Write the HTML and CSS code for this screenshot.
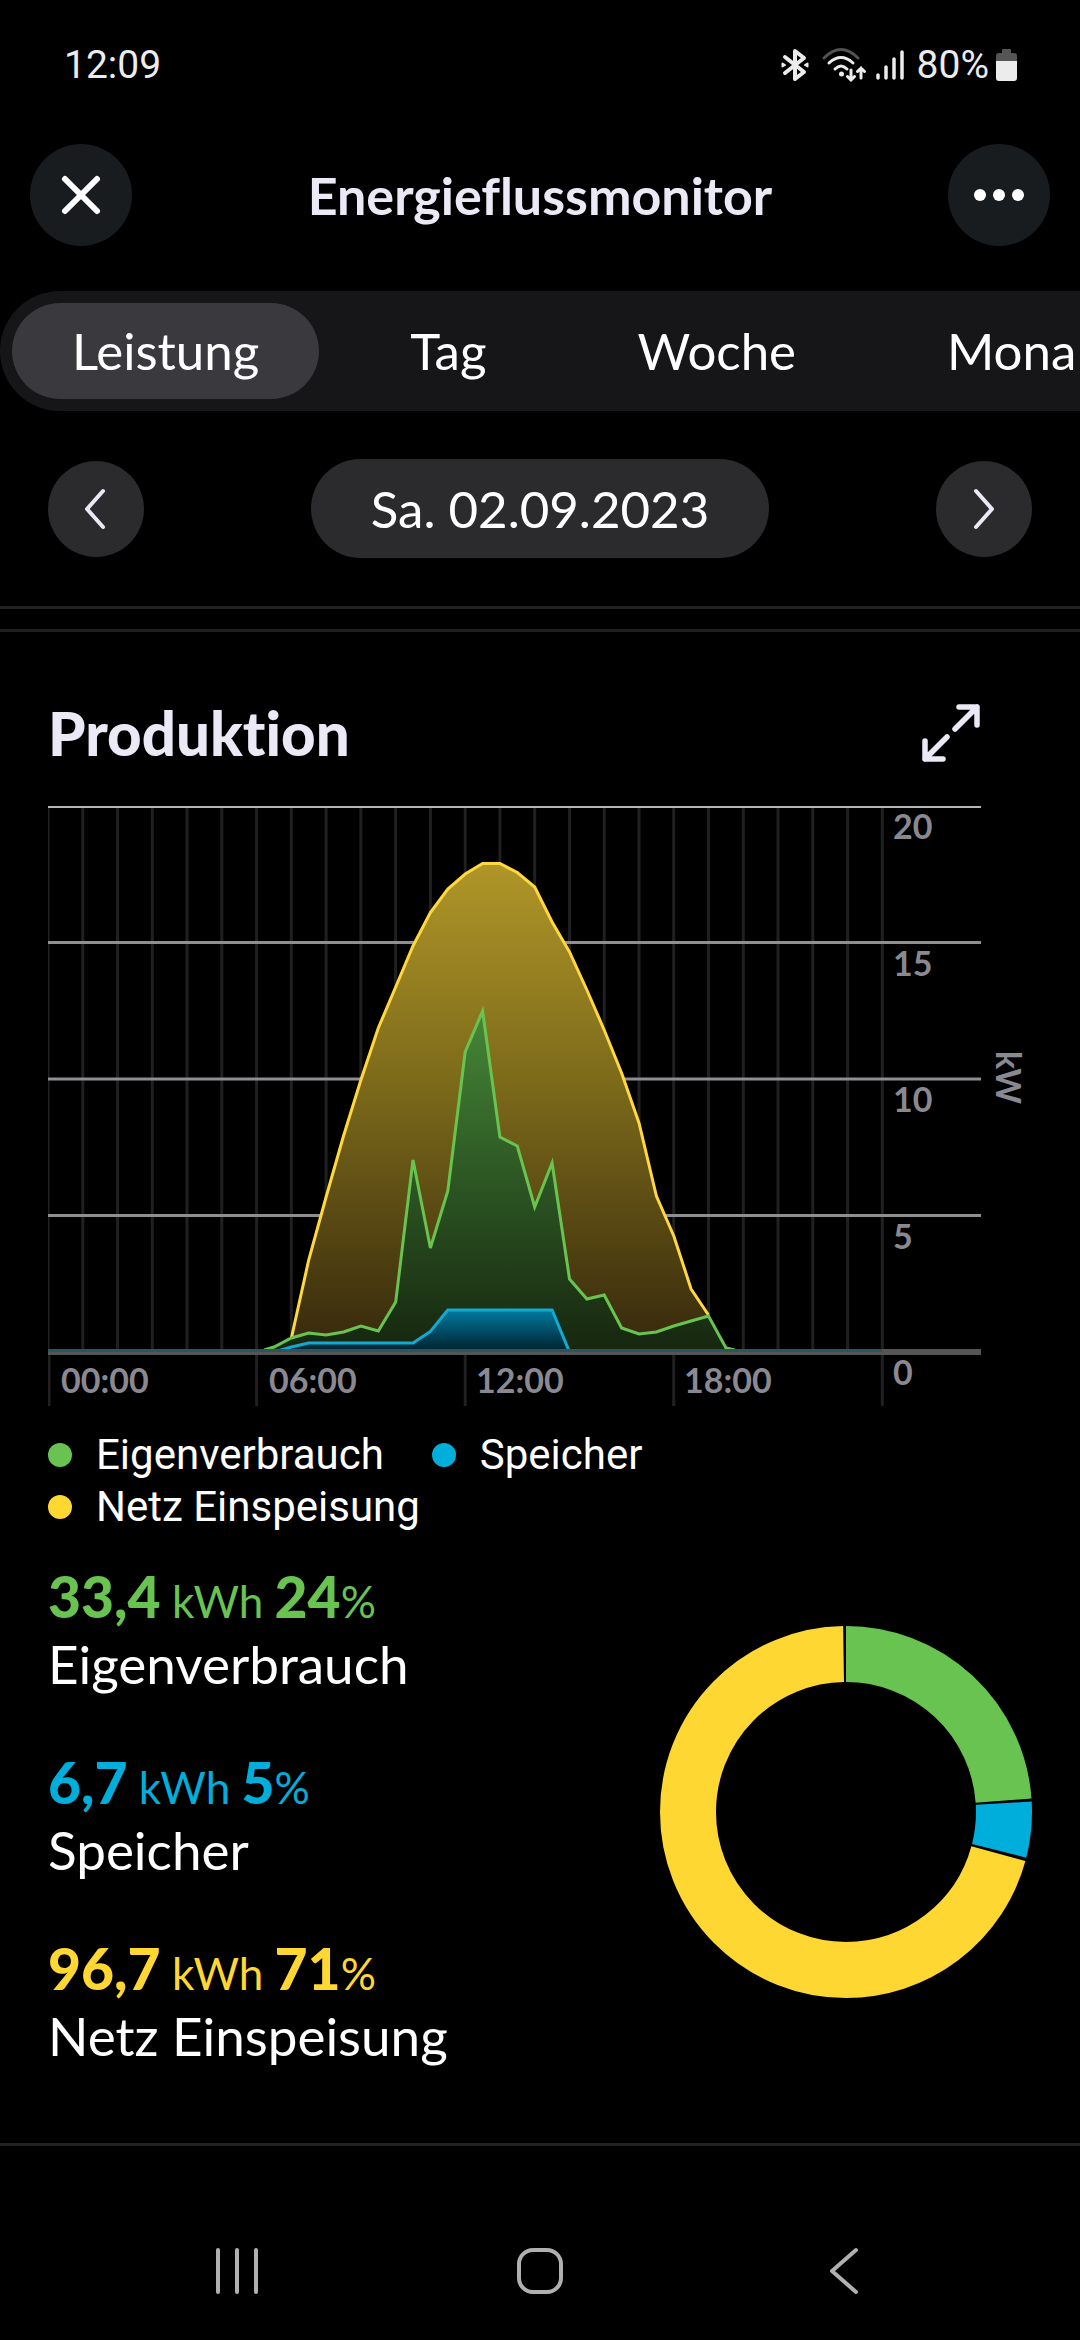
FILE: index.html
```html
<!DOCTYPE html>
<html lang="de">
<head>
<meta charset="utf-8">
<meta name="viewport" content="width=device-width, initial-scale=1">
<title>Energieflussmonitor</title>
<link rel="stylesheet" href="styles.css">
</head>
<body>
<div class="status-bar">
  <span>12:09</span>
  <div class="status-icons">
    <svg class="icon-bluetooth" viewBox="0 0 28 34" fill="none" stroke="currentColor" stroke-width="4" stroke-linejoin="round" stroke-linecap="round"><path d="M4 9 23 24 14 31V3L23 10 4 25"/><path d="M1.500 15.500v3L4 17ZM26.500 15.500v3L24 17Z" stroke-width="2"/></svg>
    <svg class="icon-wifi" viewBox="0 0 46 34" fill="none" stroke="currentColor" stroke-width="3" stroke-linecap="round"><path d="M2 10Q19-7 36 10" opacity=".35"/><path d="M7 15Q19 4 31 15M13 21Q19 15 25 21"/><circle cx="19.500" cy="26" r="2.500" fill="currentColor" stroke="none"/><path d="M29 22v10M25.500 28.500l3.500 3.500 3.500-3.500M39 30V20M35.500 23.500l3.500-3.500 3.500 3.500"/></svg>
    <svg class="icon-signal" viewBox="0 0 30 32" fill="none" stroke="currentColor" stroke-width="3.500" stroke-linecap="round"><path d="M3 26v3M11 18v11M19 10v19M27 3v26"/></svg>
    <span>80%</span>
    <svg class="icon-battery" viewBox="0 0 22 32"><path d="M6 1q0-1 1-1h7q1 0 1 1v3h3q3 0 3 3v5H0V7q0-3 3-3h3Z" fill="#555"/><path d="M0 12h21v17q0 3-3 3H3q-3 0-3-3Z" fill="currentColor"/></svg>
  </div>
</div>

<header class="app-header">
  <button class="round-button" aria-label="Schließen"><svg viewBox="0 0 102 102" fill="none" stroke="currentColor" stroke-width="6" stroke-linecap="round"><path d="M35 35 67 67M67 35 35 67"/></svg></button>
  <h1>Energieflussmonitor</h1>
  <button class="round-button" aria-label="Mehr"><svg viewBox="0 0 102 102" fill="currentColor"><circle cx="32" cy="51" r="6"/><circle cx="51" cy="51" r="6"/><circle cx="70" cy="51" r="6"/></svg></button>
</header>

<nav class="tabs" aria-label="Zeitraum">
  <button class="tab tab-active">Leistung</button>
  <button class="tab">Tag</button>
  <button class="tab">Woche</button>
  <button class="tab">Mona</button>
</nav>

<div class="date-row">
  <button class="step-button" aria-label="Vorheriger Tag"><svg viewBox="0 0 96 96" fill="none" stroke="currentColor" stroke-width="4" stroke-linecap="round" stroke-linejoin="round"><path d="M55 30 39 48 55 66"/></svg></button>
  <button class="date-button">Sa. 02.09.2023</button>
  <button class="step-button" aria-label="Nächster Tag"><svg viewBox="0 0 96 96" fill="none" stroke="currentColor" stroke-width="4" stroke-linecap="round" stroke-linejoin="round"><path d="M40 30 56 48 40 66"/></svg></button>
</div>

<main class="card">
  <div class="card-header">
    <h2>Produktion</h2>
    <button class="expand-button" aria-label="Vergrößern"><svg viewBox="0 0 60 60" fill="none" stroke="currentColor" stroke-width="5.500" stroke-linecap="round" stroke-linejoin="round"><path d="M38 4H56V22M56 4 34 26M4 38V56H22M4 56 26 34"/></svg></button>
  </div>

  <svg class="chart" viewBox="48 800 984 610" role="img" aria-label="Produktion in kW">
    <defs>
      <linearGradient id="grid-fill" x1="0" y1="0" x2="0" y2="1"><stop offset="0" stop-color="#b09628"/><stop offset=".45" stop-color="#7c6a1a"/><stop offset="1" stop-color="#35280c"/></linearGradient>
      <linearGradient id="own-fill" x1="0" y1="0" x2="0" y2="1"><stop offset="0" stop-color="#468737"/><stop offset=".5" stop-color="#2c5623"/><stop offset="1" stop-color="#16260f"/></linearGradient>
      <linearGradient id="battery-fill" x1="0" y1="0" x2="0" y2="1"><stop offset="0" stop-color="#007a9f"/><stop offset="1" stop-color="#00202b"/></linearGradient>
      <clipPath id="plot"><rect x="48" y="806" width="933" height="546"/></clipPath>
    </defs>
    <g clip-path="url(#plot)">
      <path class="hour-lines" d="M48 806V1352M82.800 806V1352M117.500 806V1352M152.300 806V1352M187 806V1352M221.800 806V1352M256.600 806V1352M291.300 806V1352M326.100 806V1352M360.900 806V1352M395.600 806V1352M430.400 806V1352M465.200 806V1352M499.900 806V1352M534.700 806V1352M569.500 806V1352M604.200 806V1352M639 806V1352M673.700 806V1352M708.500 806V1352M743.300 806V1352M778 806V1352M812.800 806V1352M847.600 806V1352M882.300 806V1352"/>
      <path class="value-lines" d="M48 942.500H981M48 1079H981M48 1215.500H981"/>
      <path d="M48 807H981" stroke="#b4b4b9" stroke-width="2"/>
      <path fill="url(#grid-fill)" d="M274 1352 291.400 1338 308.700 1260 326.100 1197 343.500 1136 360.900 1080 378.300 1028 395.700 987 413 946 430.400 912.500 447.800 889 465.200 874 482.600 863.500 499.900 863.500 517.300 872.500 534.700 887 552.100 922 569.500 952 586.900 990 604.200 1030 621.600 1073 639 1123 656.400 1196 673.800 1236 691.100 1289 708.500 1315 726 1348 743 1352Z"/>
      <path class="line line-grid" d="M291.400 1338 308.700 1260 326.100 1197 343.500 1136 360.900 1080 378.300 1028 395.700 987 413 946 430.400 912.500 447.800 889 465.200 874 482.600 863.500 499.900 863.500 517.300 872.500 534.700 887 552.100 922 569.500 952 586.900 990 604.200 1030 621.600 1073 639 1123 656.400 1196 673.800 1236 691.100 1289 708.500 1315"/>
      <path fill="url(#own-fill)" d="M256 1352 274 1347 291.400 1338 308.700 1333 326.100 1335 343.500 1332 360.900 1326 378.300 1331 395.700 1302 413 1160 430.400 1248 447.800 1191 465.200 1052 482.600 1011 499.900 1137 517.300 1146 534.700 1207 552.100 1163 569.500 1279 586.900 1299 604.200 1295 621.600 1328 639 1334 656.400 1332 673.800 1326 691.100 1321 708.500 1316 726 1348 743 1352Z"/>
      <path class="line line-own" d="M264 1350 274 1347 291.400 1338 308.700 1333 326.100 1335 343.500 1332 360.900 1326 378.300 1331 395.700 1302 413 1160 430.400 1248 447.800 1191 465.200 1052 482.600 1011 499.900 1137 517.300 1146 534.700 1207 552.100 1163 569.500 1279 586.900 1299 604.200 1295 621.600 1328 639 1334 656.400 1332 673.800 1326 691.100 1321 708.500 1316 726 1348 735 1350"/>
      <path fill="url(#battery-fill)" d="M274 1352 291.400 1347 308.700 1343H413L430.400 1331.500 447.800 1310H552.100L569.500 1352Z"/>
      <path class="line line-battery" d="M274 1352 291.400 1347 308.700 1343H413L430.400 1331.500 447.800 1310H552.100L569.500 1352"/>
    </g>
    <path d="M48 1352H981" stroke="#555556" stroke-width="6"/>
    <path d="M48 1350.500H882" stroke="#2c5560" stroke-width="3"/>
    <path class="hour-lines" d="M49 1355V1406M256.600 1355V1406M465.200 1355V1406M673.700 1355V1406M882.300 1355V1406"/>
    <g class="axis-text">
      <text x="893" y="839">20</text><text x="893" y="976">15</text><text x="893" y="1112">10</text><text x="893" y="1249">5</text><text x="893" y="1385">0</text>
      <text x="61" y="1393">00:00</text><text x="269" y="1393">06:00</text><text x="476" y="1393">12:00</text><text x="684" y="1393">18:00</text>
      <text transform="translate(996 1051) rotate(90)">kW</text>
    </g>
  </svg>

  <ul class="legend">
    <li><span class="dot dot-own"></span>Eigenverbrauch</li>
    <li><span class="dot dot-battery"></span>Speicher</li>
    <li><span class="dot dot-grid"></span>Netz Einspeisung</li>
  </ul>

  <div class="summary">
    <dl class="stats">
      <div><dd class="own"><b>33,4</b> kWh <b>24</b>%</dd><dt>Eigenverbrauch</dt></div>
      <div><dd class="battery"><b>6,7</b> kWh <b>5</b>%</dd><dt>Speicher</dt></div>
      <div><dd class="grid"><b>96,7</b> kWh <b>71</b>%</dd><dt>Netz Einspeisung</dt></div>
    </dl>
    <svg class="donut" viewBox="-186 -186 372 372" role="img" aria-label="Verteilung">
      <g fill="none" stroke-width="56" transform="rotate(-90)">
        <circle r="158" pathLength="1000" stroke="#69c350" stroke-dasharray="238.500 761.500"/>
        <circle r="158" pathLength="1000" stroke="#00aedb" stroke-dasharray="48.500 951.500" stroke-dashoffset="-241"/>
        <circle r="158" pathLength="1000" stroke="#ffd733" stroke-dasharray="705 295" stroke-dashoffset="-292.500"/>
      </g>
    </svg>
  </div>
</main>

<nav class="system-nav" aria-label="System">
  <button aria-label="Letzte Apps"><svg viewBox="0 0 100 100"><path d="M31 29V71M50 29V71M69 29V71"/></svg></button>
  <button aria-label="Start"><svg viewBox="0 0 100 100"><rect x="29" y="29" width="42" height="42" rx="14"/></svg></button>
  <button aria-label="Zurück"><svg viewBox="0 0 100 100"><path d="M63 29 39 50 63 71"/></svg></button>
</nav>
</body>
</html>
```
FILE: styles.css
```css
* { box-sizing: border-box; margin: 0; padding: 0; }
body {
  min-height: 100vh;
  overflow-x: hidden;
  background: #000;
  color: #fff;
  font-family: Lato, "Open Sans", sans-serif;
  font-size: 51px;
  font-variant-ligatures: none;
}
button { border: 0; background: none; color: inherit; font: inherit; font-variant-ligatures: none; }
svg { display: block; flex: none; }
ul { list-style: none; }

.status-bar {
  display: flex;
  align-items: center;
  justify-content: space-between;
  height: 129px;
  padding: 0 62px 0 64px;
  color: #ececec;
  font-family: Roboto, sans-serif;
  font-size: 39px;
}
.status-icons { display: flex; align-items: center; gap: 7px; }
.icon-bluetooth { width: 28px; height: 34px; margin-right: 6px; }
.icon-wifi { width: 46px; height: 34px; }
.icon-signal { width: 30px; height: 32px; margin-right: 5px; }
.icon-battery { width: 22px; height: 32px; }

.app-header {
  display: flex;
  align-items: center;
  justify-content: space-between;
  padding: 15px 30px 45px;
}
.app-header h1 { color: #eae9f5; font-size: 52px; font-weight: 700; line-height: 60px; }
.round-button { width: 102px; height: 102px; border-radius: 50%; background: #191c1f; }

.tabs {
  display: flex;
  gap: 31px;
  height: 120px;
  padding: 12px;
  border-radius: 60px 0 0 60px;
  background: #161618;
  overflow: hidden;
}
.tab { flex: none; padding: 0 60px; border-radius: 48px; line-height: 96px; }
.tab-active { background: #3a393e; }

.date-row {
  display: flex;
  align-items: center;
  justify-content: space-between;
  padding: 48px;
  border-bottom: 3px solid #202020;
}
.step-button { width: 96px; height: 96px; border-radius: 50%; background: #2b2b2d; color: #eae9f5; }
.date-button { padding: 0 60px; border-radius: 50px; background: #2b2b2d; line-height: 99px; }

.card {
  margin-top: 20px;
  padding: 71px 48px 73px;
  border-top: 3px solid #202020;
  border-bottom: 3px solid #202020;
}
.card-header {
  display: flex;
  align-items: center;
  justify-content: space-between;
  height: 60px;
  margin-bottom: 37px;
  padding-right: 51px;
  color: #eae9f5;
}
.card-header h2 { font-size: 60px; font-weight: 900; line-height: 60px; }
.expand-button { width: 60px; height: 60px; }

.chart { width: 100%; height: auto; }
.hour-lines { stroke: #202020; stroke-width: 3px; }
.value-lines { stroke: #8e8e93; stroke-width: 3px; }
.line { fill: none; stroke-width: 3px; }
.line-grid { stroke: #ffd740; }
.line-own { stroke: #69c350; }
.line-battery { stroke: #12a9d2; }
.axis-text { fill: #8a8991; font-size: 34px; font-weight: 700; }

.legend {
  display: flex;
  flex-wrap: wrap;
  column-gap: 48px;
  margin-top: 19px;
  font-family: Roboto, sans-serif;
  font-size: 42px;
  line-height: 52px;
}
.legend li { display: flex; align-items: center; gap: 24px; }
.dot { width: 24px; height: 24px; border-radius: 50%; }
.dot-own { background: #69c350; }
.dot-battery { background: #00aedb; }
.dot-grid { background: #ffd733; }

.summary {
  display: flex;
  align-items: center;
  justify-content: space-between;
  margin-top: 29px;
}
.stats { display: grid; gap: 50px; font-size: 53px; line-height: 68px; }
.stats dd { height: 68px; font-size: 44px; }
.stats b { font-size: 57px; font-weight: 900; }
.own { color: #69c350; }
.battery { color: #00aedb; }
.grid { color: #ffd733; }
.donut { width: 372px; height: 372px; margin-bottom: 8px; }

.system-nav {
  display: flex;
  justify-content: space-around;
  padding: 75px 85px 0;
}
.system-nav svg {
  width: 100px;
  height: 100px;
  fill: none;
  stroke: #b0b0b0;
  stroke-width: 4px;
  stroke-linecap: round;
  stroke-linejoin: round;
}
```
